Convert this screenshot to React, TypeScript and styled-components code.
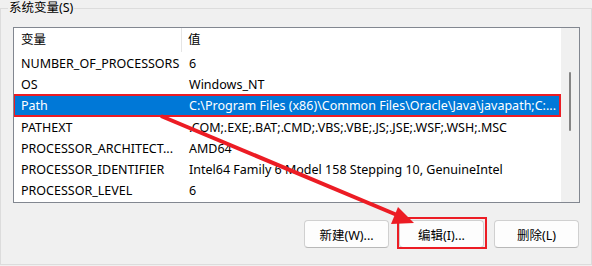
import styled, { createGlobalStyle } from "styled-components";

const GlobalStyle = createGlobalStyle`
  html, body {
    margin: 0;
    padding: 0;
    background: #f0f0f0;
    overflow: hidden;
  }
  body {
    font-family: "Noto Sans", "Noto Sans CJK SC", sans-serif;
    font-size: 12.5px;
    color: #000;
  }
`;

type Variable = { name: string; value: string };

const variables: Variable[] = [
  { name: "NUMBER_OF_PROCESSORS", value: "6" },
  { name: "OS", value: "Windows_NT" },
  {
    name: "Path",
    value: "C:\\Program Files (x86)\\Common Files\\Oracle\\Java\\javapath;C:...",
  },
  { name: "PATHEXT", value: ".COM;.EXE;.BAT;.CMD;.VBS;.VBE;.JS;.JSE;.WSF;.WSH;.MSC" },
  { name: "PROCESSOR_ARCHITECT...", value: "AMD64" },
  {
    name: "PROCESSOR_IDENTIFIER",
    value: "Intel64 Family 6 Model 158 Stepping 10, GenuineIntel",
  },
  { name: "PROCESSOR_LEVEL", value: "6" },
];

const App: React.FC = () => {
  return (
    <>
      <GlobalStyle />
      <Page>
        <Group>
          <Legend>系统变量(S)</Legend>
          <ListBox>
            <Columns>
              <HeaderRow>
                <HeaderCell $first>变量</HeaderCell>
                <HeaderCell>值</HeaderCell>
              </HeaderRow>
              {variables.map((v) => (
                <Row key={v.name} $selected={v.name === "Path"}>
                  <Cell>{v.name}</Cell>
                  <Cell>{v.value}</Cell>
                </Row>
              ))}
            </Columns>
            <ScrollBar>
              <Thumb />
            </ScrollBar>
          </ListBox>
          <Buttons>
            <Button>新建(W)...</Button>
            <Button $marked>编辑(I)...</Button>
            <Button>删除(L)</Button>
          </Buttons>
        </Group>
        <Annotation width="592" height="266" viewBox="0 0 592 266">
          <line
            x1="161"
            y1="116"
            x2="397"
            y2="215"
            stroke="#ec1c24"
            strokeWidth="4"
          />
          <polygon points="414,223 391,224 398,207" fill="#ec1c24" />
        </Annotation>
      </Page>
    </>
  );
};

export default App;

const Page = styled.div`
  position: relative;
  width: 592px;
  height: 266px;
`;

const Group = styled.fieldset`
  box-sizing: border-box;
  margin: 0;
  width: 592px;
  height: 265px;
  border: 1px solid #dcdcdc;
  padding: 11px 12px 16px 7px;
  min-width: 0;
`;

const Legend = styled.legend`
  padding: 0 1px;
  line-height: 16px;
  font-size: 12.5px;
  color: #000;
`;

const ListBox = styled.div`
  box-sizing: border-box;
  margin-left: 5px;
  width: 567px;
  height: 176px;
  border: 1px solid #828790;
  background: #fff;
  display: flex;
  overflow: hidden;
`;

const Columns = styled.div`
  flex: 1;
  display: flex;
  flex-direction: column;
  min-width: 0;
  border-right: 1px solid #f0f0f0;
`;

const HeaderRow = styled.div`
  display: grid;
  grid-template-columns: 168px 1fr;
  height: 25px;
  flex-shrink: 0;
  align-items: start;
`;

const HeaderCell = styled.div<{ $first?: boolean }>`
  height: 24px;
  line-height: 24px;
  padding-left: ${(p) => (p.$first ? "7px" : "6px")};
  border-right: ${(p) => (p.$first ? "1px solid #e5e5e5" : "none")};
  white-space: nowrap;
`;

const Row = styled.div<{ $selected?: boolean }>`
  display: grid;
  grid-template-columns: 168px 1fr;
  height: 21.2px;
  flex-shrink: 0;
  align-items: center;
  position: relative;
  background: ${(p) => (p.$selected ? "#0078d7" : "transparent")};
  color: ${(p) => (p.$selected ? "#fff" : "#000")};

  &::after {
    content: "";
    display: ${(p) => (p.$selected ? "block" : "none")};
    position: absolute;
    inset: -1.5px 0 -0.5px -1px;
    border: 2.5px solid #ec1c24;
    pointer-events: none;
  }
`;

const Cell = styled.div`
  padding-left: 7px;
  white-space: nowrap;
  overflow: hidden;
`;

const ScrollBar = styled.div`
  width: 17px;
  flex-shrink: 0;
  background: #f0f0f0;
  position: relative;
`;

const Thumb = styled.div`
  position: absolute;
  left: 7px;
  top: 44px;
  width: 2px;
  height: 59px;
  border-radius: 1px;
  background: #858585;
`;

const Buttons = styled.div`
  display: flex;
  justify-content: flex-end;
  gap: 10px;
  margin-top: 17px;
`;

const Button = styled.button<{ $marked?: boolean }>`
  position: relative;
  box-sizing: border-box;
  width: 85px;
  height: 28px;
  background: #fdfdfd;
  border: 1px solid #d0d0d0;
  border-bottom-color: #b8b8b8;
  border-radius: 4px;
  font-family: "Noto Sans", "Noto Sans CJK SC", sans-serif;
  font-size: 12.5px;
  color: #000;
  padding: 0;

  &::after {
    content: "";
    display: ${(p) => (p.$marked ? "block" : "none")};
    position: absolute;
    inset: -4px -4px -2px -3px;
    border: 2.5px solid #ec1c24;
    pointer-events: none;
  }
`;

const Annotation = styled.svg`
  position: absolute;
  left: 0;
  top: 0;
  pointer-events: none;
`;
